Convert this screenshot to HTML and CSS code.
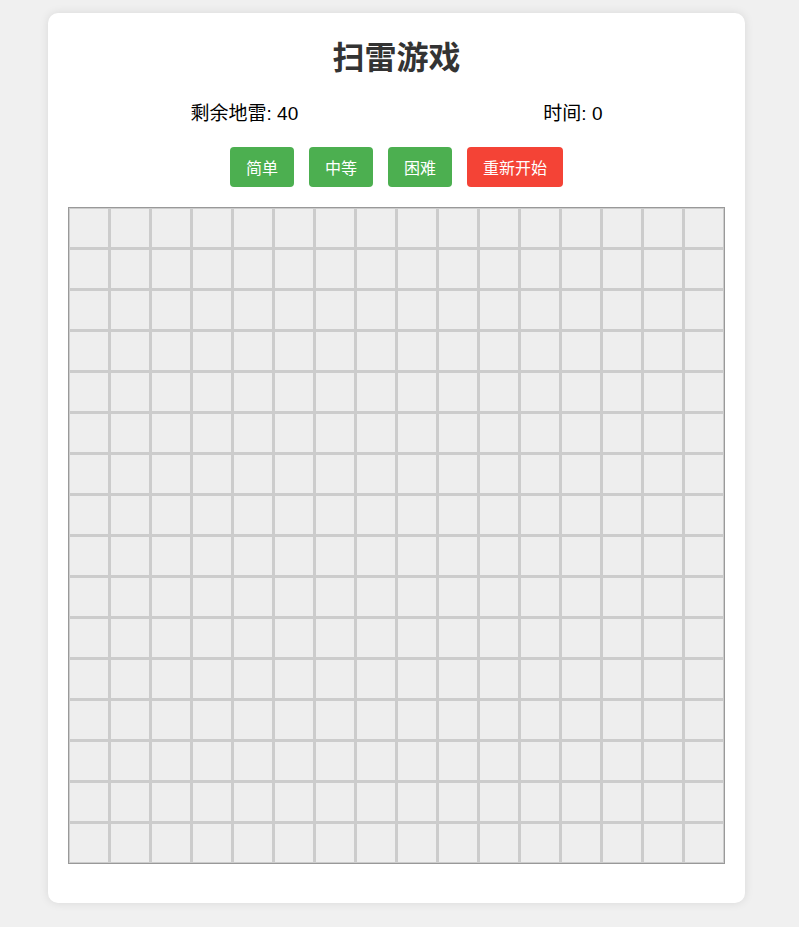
FILE: index.html
```html
<!DOCTYPE html>
<html>
	<head>
		<meta charset="UTF-8">
		<title>扫雷游戏</title>
		<link rel="stylesheet" href="styles.css">
	</head>

	<body>
		<div class="game">
			<h1>扫雷游戏</h1>
			<div class="info">
				<span>剩余地雷: <b id="mines">40</b></span>
				<span>时间: <b id="time">0</b></span>
			</div>
			<div class="controls">
				<button class="level" data-size="9" data-mines="10">简单</button>
				<button class="level" data-size="16" data-mines="40">中等</button>
				<button class="level" data-size="22" data-mines="99">困难</button>
				<button class="restart">重新开始</button>
			</div>
			<div class="board" id="board"></div>
		</div>
		<script type="text/javascript">
			var board = document.getElementById("board");
			var size = 16;

			//------生成棋盘格子------
			function build() {
				board.innerHTML = "";
				board.style.gridTemplateColumns = "repeat(" + size + ", 40px)";
				for(var i = 0; i < size * size; i++) {
					var cell = document.createElement("div");
					cell.className = "cell";
					board.appendChild(cell);
				}
			}
			build();
		</script>
	</body>

</html>
```

FILE: styles.css
```css
body {
	margin: 0;
	padding: 13px 0 20px 48px;
	background-color: #f0f0f0;
	font-family: "Liberation Sans", "Noto Sans CJK SC", sans-serif;
}

.game {
	width: 657px;
	padding: 22px 20px 39px;
	background-color: #fff;
	border-radius: 10px;
	box-shadow: 0 0 10px rgba(0, 0, 0, 0.1);
}

h1 {
	margin: 0 0 20px;
	color: #333;
	font-size: 32px;
	line-height: 46px;
	text-align: center;
}

.info {
	display: flex;
	justify-content: space-around;
	margin-bottom: 20px;
	font-size: 19px;
	line-height: 26px;
}

.info b {
	font-weight: normal;
}

.controls {
	display: flex;
	justify-content: center;
	gap: 15px;
	margin-bottom: 20px;
}

button {
	height: 40px;
	padding: 0 16px;
	border: none;
	border-radius: 4px;
	color: #fff;
	font-family: inherit;
	font-size: 16px;
	cursor: pointer;
}

.level {
	background-color: #4caf50;
}

.restart {
	background-color: #f44336;
}

.board {
	display: grid;
	grid-template-columns: repeat(16, 40px);
	gap: 1px;
	width: max-content;
	border: 1px solid #999;
	background-color: #ccc;
}

.cell {
	width: 40px;
	height: 40px;
	box-sizing: border-box;
	border: 1px solid #ccc;
	background-color: #eee;
}
```
